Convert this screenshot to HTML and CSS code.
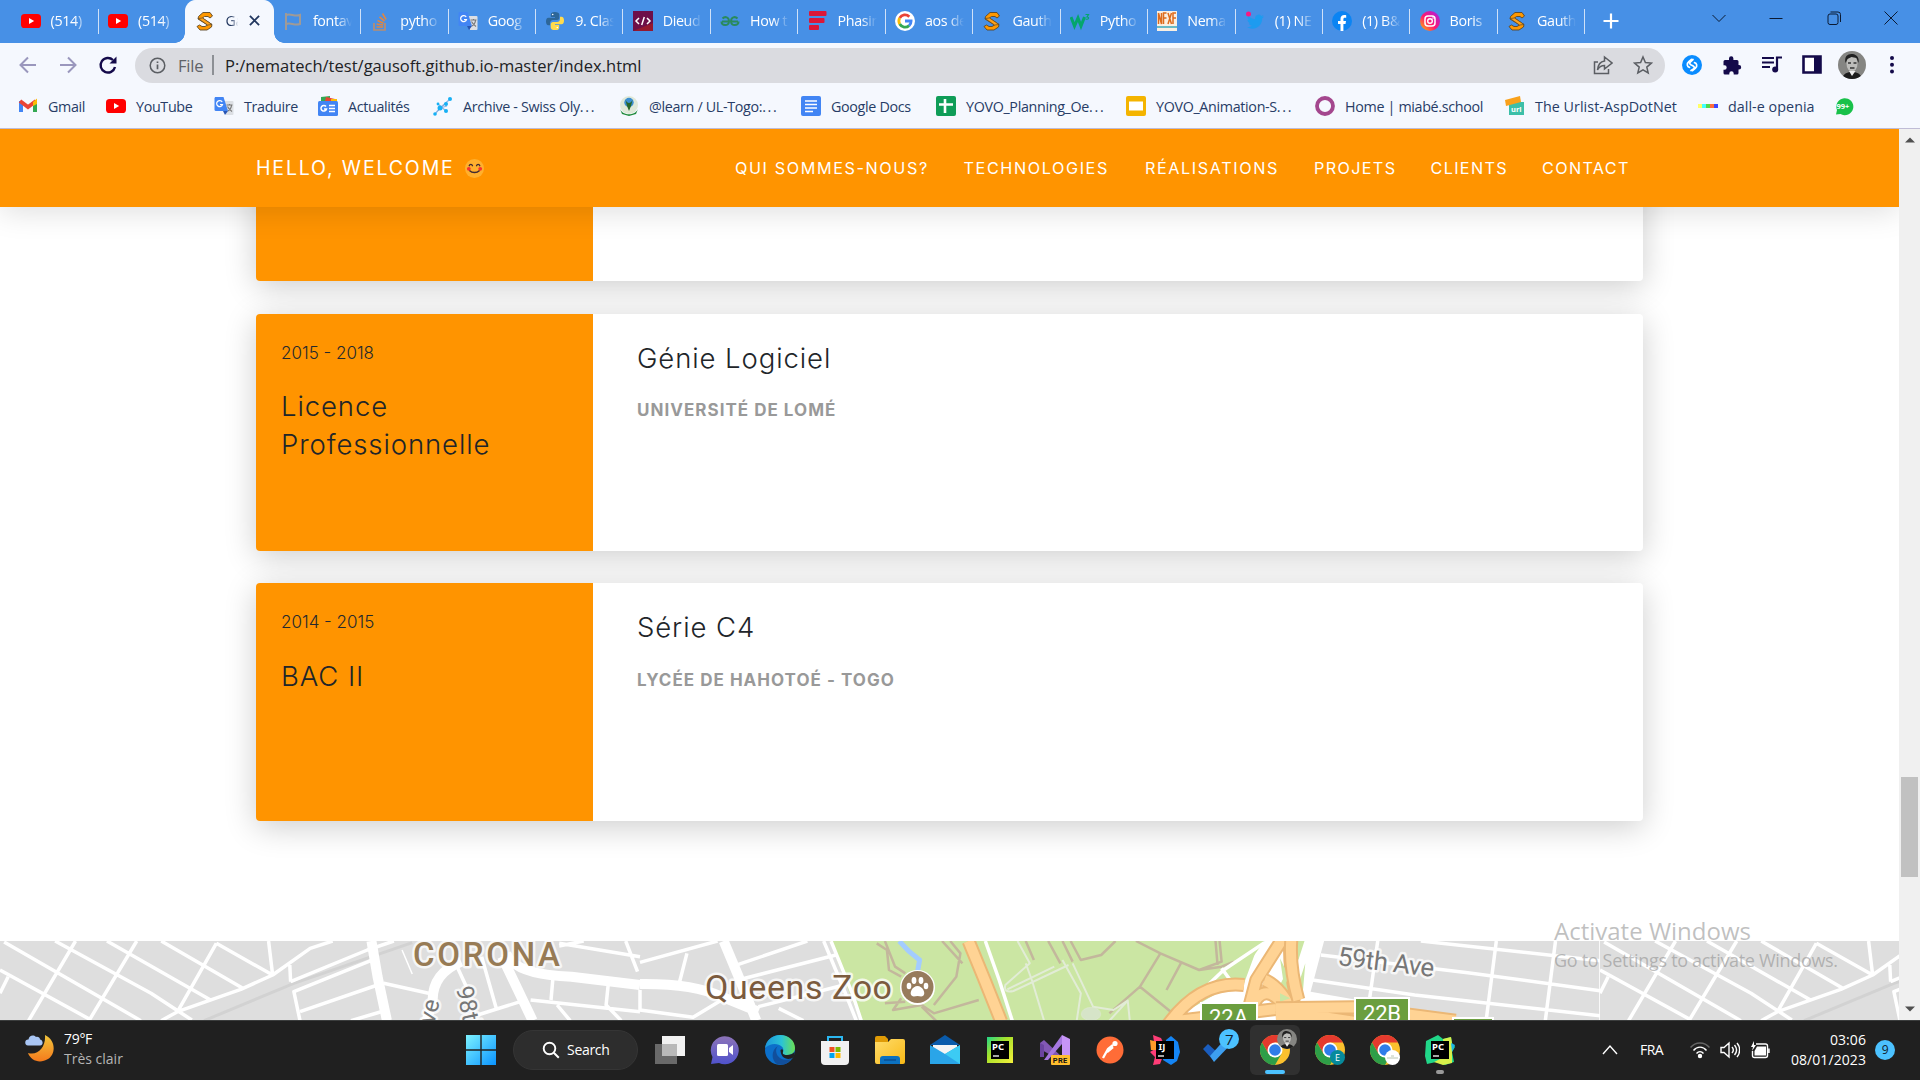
FILE: index.html
```html
<!DOCTYPE html>
<html lang="fr">
<head>
<meta charset="utf-8">
<title>Gauthier</title>
<link rel="stylesheet" href="styles.css">
</head>
<body>
<svg class="defs" width="0" height="0" aria-hidden="true">
  <defs>
    <linearGradient id="g-win" x1="0" y1="0" x2="1" y2="1"><stop offset="0" stop-color="#7df3ff"/><stop offset="1" stop-color="#0a93ff"/></linearGradient>
    <linearGradient id="g-insta" x1="0" y1="1" x2="1" y2="0"><stop offset="0" stop-color="#ffc400"/><stop offset=".45" stop-color="#ff1a6c"/><stop offset="1" stop-color="#a020f0"/></linearGradient>
    <linearGradient id="g-moon" x1="0" y1="0" x2="0" y2="1"><stop offset="0" stop-color="#f2c63c"/><stop offset="1" stop-color="#f47a1c"/></linearGradient>
    <linearGradient id="g-chat" x1="0" y1="0" x2="0" y2="1"><stop offset="0" stop-color="#8d74b8"/><stop offset="1" stop-color="#4f52cc"/></linearGradient>
    <linearGradient id="g-edge" x1="0" y1="0" x2="1" y2="0"><stop offset="0" stop-color="#1c96dc"/><stop offset=".55" stop-color="#2bc3d6"/><stop offset="1" stop-color="#6be054"/></linearGradient>
    <linearGradient id="g-folder" x1="0" y1="0" x2="1" y2="1"><stop offset="0" stop-color="#ffdc6b"/><stop offset="1" stop-color="#f9b916"/></linearGradient>
    <linearGradient id="g-pc" x1="0" y1="0" x2="1" y2="1"><stop offset="0" stop-color="#21d789"/><stop offset=".4" stop-color="#a8e22a"/><stop offset="1" stop-color="#f4f03c"/></linearGradient>
    <symbol id="youtube" viewBox="0 0 20 20"><rect y="3" width="20" height="14" rx="3.6" fill="#f00"/><path d="M8 7l5.2 3L8 13z" fill="#fff"/></symbol>
    <symbol id="slogo" viewBox="0 0 20 20"><path d="M3.500 5.500L8 1.500h7l2.500 3.500-2.500 2-2-1.500H9.500l-2 1.500L17 13.500l-.500 2.500-4.500 3H5L2 15.500 4.500 14l2.500 1.500h3L12.500 14 3 8z" fill="#ff9800" stroke="#5b4626" stroke-width=".9"/><path d="M3.200 7.500L7.500 7l9.500 6.500-4.500.5z" fill="#ffa21a" stroke="#5b4626" stroke-width=".7"/></symbol>
    <symbol id="flag" viewBox="0 0 20 20"><path d="M3 2v17M3 4c5-2 8 2 14 0v9c-6 2-9-2-14 0" fill="none" stroke="#a09a96" stroke-width="2"/></symbol>
    <symbol id="stack" viewBox="0 0 20 20"><path d="M4 12v7h11v-7" fill="none" stroke="#b98d70" stroke-width="1.700"/><path d="M6.500 16h6.500M6.600 13l6.500 1M7.500 9.500l6 2.700M9.500 5.800l5 4.400M12.500 2.500l3.600 6" fill="none" stroke="#e08642" stroke-width="1.600"/></symbol>
    <symbol id="translate" viewBox="0 0 20 20"><path d="M9 5h9.500a1 1 0 0 1 1 1v12a1 1 0 0 1-1 1H12z" fill="#dcdfe4"/><path d="M1 1h8.500l4.500 14H2a1.500 1.500 0 0 1-1.500-1.500v-11z" fill="#4285f4"/><path d="M9 15h5l-3 4z" fill="#2956b4"/><path d="M8.200 6A3 3 0 1 0 8.500 8.500H6" fill="none" stroke="#fff" stroke-width="1.200"/><path d="M12.500 9h6M15.500 8v1M17.500 9c0 3-2 5-3.500 6M13.500 10.500c1 2 2.500 3.500 4.500 5" fill="none" stroke="#777" stroke-width="1.100"/></symbol>
    <symbol id="python" viewBox="0 0 20 20"><path d="M9.800 1c-3 0-4 1-4 2.600V6H10v.8H3.500C1.800 6.800 1 8.500 1 10.600s.9 3.700 2.500 3.700H5v-2.200C5 10.400 6.300 9 8 9h4c1.300 0 2.300-1 2.300-2.300V3.600C14.300 2 12.700 1 9.800 1z" fill="#2d6698"/><path d="M10.200 19c3 0 4-1 4-2.600V14H10v-.8h6.500c1.700 0 2.500-1.700 2.500-3.800s-.9-3.700-2.500-3.700H15v2.200C15 9.600 13.700 11 12 11H8c-1.300 0-2.300 1-2.300 2.300v3.100C5.700 18 7.300 19 10.200 19z" fill="#ffdb4d"/><circle cx="7.700" cy="3.500" r=".8" fill="#fff"/><circle cx="12.300" cy="16.500" r=".8" fill="#fff"/></symbol>
    <symbol id="code" viewBox="0 0 20 20"><rect width="20" height="20" fill="#6d0f49"/><path d="M0 20h20V12z" fill="#94182f"/><path d="M6 7l-3 3 3 3M14 7l3 3-3 3M11.300 6L8.700 14" fill="none" stroke="#fff" stroke-width="1.500"/></symbol>
    <symbol id="geeks" viewBox="0 0 20 20"><path d="M9 10.500H2M9 10.500c0 5-7.500 4.500-7.500 0M2.500 7.500C5 5 9 6 9 10.500M11 10.500h7M11 10.500c0 5 7.500 4.500 7.500 0M17.500 7.500C15 5 11 6 11 10.500" fill="none" stroke="#2a8a5c" stroke-width="2"/></symbol>
    <symbol id="phas" viewBox="0 0 20 20"><g fill="#dc1738"><rect x="1" width="17.500" height="5" rx="1"/><rect x="1" y="7" width="15.500" height="5" rx="1"/><rect x="1" y="14" width="10" height="5" rx="1"/></g></symbol>
    <symbol id="google" viewBox="0 0 20 20"><circle cx="10" cy="10" r="10" fill="#fff"/><g fill="none" stroke-width="2.800"><path d="M14.300 5.700A6.100 6.100 0 0 0 4.700 7" stroke="#ea4335"/><path d="M4.700 7a6.100 6.100 0 0 0 0 6" stroke="#fbbc05"/><path d="M4.700 13a6.100 6.100 0 0 0 9.400 1.600" stroke="#34a853"/><path d="M14.100 14.600A6 6 0 0 0 16.100 10H10" stroke="#4285f4"/></g></symbol>
    <symbol id="w3" viewBox="0 0 20 20"><path d="M1 6l3.500 9 3.500-8 3 8 3.500-9" fill="none" stroke="#04a66c" stroke-width="3"/><path d="M15.500 3.500h3L17 6c2.500 0 2 3-1.500 2" fill="none" stroke="#04a66c" stroke-width="1.200"/></symbol>
    <symbol id="nema" viewBox="0 0 20 20"><rect width="20" height="20" fill="#f9efe2"/><path d="M1.500 13V2l3 11V2M6.500 13V2h3M6.500 7h3M11 13l3.500-11M11 2l3.500 11M16 13V2h3M16 7h3" fill="none" stroke="#dd6b1c" stroke-width="1.500"/><path d="M0 16h20" stroke="#36a9bd" stroke-width="1.500"/></symbol>
    <symbol id="twitter" viewBox="0 0 20 20"><path d="M19 5.500c-.7.300-1.300.5-2 .5.700-.5 1.200-1.100 1.500-1.900-.7.400-1.400.6-2.200.8A3.500 3.500 0 0 0 10.200 8C7.300 7.900 4.800 6.500 3 4.500c-1 1.700-.4 3.700 1.100 4.700-.6 0-1.100-.2-1.600-.4 0 1.700 1.200 3 2.800 3.400-.5.200-1 .2-1.600.1.500 1.400 1.700 2.300 3.300 2.400-1.400 1.100-3.300 1.600-5.100 1.400C8.500 20.200 17.200 16 17.200 7.500c.7-.6 1.300-1.200 1.800-2z" fill="#1d9bf0"/><circle cx="3.500" cy="3" r="2.500" fill="#f91880"/></symbol>
    <symbol id="facebook" viewBox="0 0 20 20"><circle cx="10" cy="10" r="10" fill="#0b84f3"/><path d="M8.500 20v-7H6v-3h2.500V8c0-2.600 1.500-4 3.800-4 .9 0 1.500.1 1.900.2v2.500h-1.300c-1.200 0-1.500.7-1.500 1.500V10H14l-.5 3h-2.100v7z" fill="#fff"/></symbol>
    <symbol id="insta" viewBox="0 0 20 20"><circle cx="10" cy="10" r="10" fill="url(#g-insta)"/><rect x="5" y="5" width="10" height="10" rx="3" fill="none" stroke="#fff" stroke-width="1.500"/><circle cx="10" cy="10" r="2.300" fill="none" stroke="#fff" stroke-width="1.400"/><circle cx="13" cy="7" r=".8" fill="#fff"/></symbol>
    <symbol id="chrome" viewBox="0 0 30 30"><circle cx="15" cy="15" r="15" fill="#fbc02d"/><path d="M2 7.500A15 15 0 0 1 28 7.500H15L8.500 18.800z" fill="#e53a2e"/><path d="M2 7.500l6.500 11.300L15 22.500l6.500-3.700L15 30A15 15 0 0 1 2 7.500z" fill="#2e9e48"/><circle cx="15" cy="15" r="7.500" fill="#fff"/><circle cx="15" cy="15" r="5.800" fill="#2f7de9"/></symbol>
    <symbol id="face" viewBox="0 0 28 28"><clipPath id="round"><circle cx="14" cy="14" r="14"/></clipPath><g clip-path="url(#round)"><rect width="28" height="28" fill="#858582"/><path d="M4 28c1-6 6-7 10-7s9 1 10 7z" fill="#1d1d1d"/><ellipse cx="14" cy="12.500" rx="5.500" ry="8" fill="#bdbdba"/><path d="M7.500 12C6 5 10 2.500 14.500 3s7 4 6 9l-2-5-5-1-4 2z" fill="#222"/><path d="M10 12h3M15.500 12h3M12 17h4.500" stroke="#333" stroke-width="1.300"/><path d="M11 20l3 5 3.500-5z" fill="#eee"/></g></symbol>
    <symbol id="pycharm" viewBox="0 0 30 30"><rect x="6" y="6" width="18" height="18" fill="#000"/><text x="7" y="15" class="ide">PC</text><path d="M8 21h6" stroke="#fff" stroke-width="1.300"/></symbol>
    <symbol id="tile" viewBox="0 0 320 79" overflow="visible">
      <g transform="matrix(.40816 0 0 .33333 0 -11)" fill="none" stroke="#fff">
        <path class="rail" d="M500 272L720 160 1010 38"/>
        <path class="rd" d="M10 36L345 272M135 33L370 190 470 270M262 33L517 211M395 33L595 175M530 40L668 135M0 120L220 268M70 272L185 33M218 272L335 33M435 245L530 40M0 190L20 140M395 272L435 245 590 178 668 135 760 55 815 33M658 33L668 135M712 155L710 105M712 155L900 60 965 33M735 272L720 185 922 85"/>
      </g>
    </symbol>
  </defs>
</svg>

<header class="browser">
  <div class="tabstrip">
    <div class="tab"><svg><use href="#youtube"/></svg><span>(514)</span></div>
    <div class="tab nosep"><svg><use href="#youtube"/></svg><span>(514)</span></div>
    <div class="tab active"><svg><use href="#slogo"/></svg><span>Ga</span><svg class="close" viewBox="0 0 12 12"><path d="M1 1l10 10M11 1L1 11" stroke="#22375f" stroke-width="2"/></svg></div>
    <div class="tab"><svg><use href="#flag"/></svg><span>fontav</span></div>
    <div class="tab"><svg><use href="#stack"/></svg><span>pytho</span></div>
    <div class="tab"><svg><use href="#translate"/></svg><span>Goog</span></div>
    <div class="tab"><svg><use href="#python"/></svg><span>9. Clas</span></div>
    <div class="tab"><svg><use href="#code"/></svg><span>Dieud</span></div>
    <div class="tab"><svg><use href="#geeks"/></svg><span>How t</span></div>
    <div class="tab"><svg><use href="#phas"/></svg><span>Phasin</span></div>
    <div class="tab"><svg><use href="#google"/></svg><span>aos de</span></div>
    <div class="tab"><svg><use href="#slogo"/></svg><span>Gauth</span></div>
    <div class="tab"><svg><use href="#w3"/></svg><span>Pytho</span></div>
    <div class="tab"><svg><use href="#nema"/></svg><span>Nema</span></div>
    <div class="tab"><svg><use href="#twitter"/></svg><span>(1) NE</span></div>
    <div class="tab"><svg><use href="#facebook"/></svg><span>(1) B&amp;</span></div>
    <div class="tab"><svg><use href="#insta"/></svg><span>Boris</span></div>
    <div class="tab"><svg><use href="#slogo"/></svg><span>Gauth</span></div>
    <svg class="newtab" viewBox="0 0 16 16"><path d="M8 .5v15M.5 8h15" stroke="#fff" stroke-width="2.200"/></svg>
    <div class="winctl">
      <svg viewBox="0 0 14 14"><path d="M.5 4L7 10.500 13.500 4"/></svg>
      <svg viewBox="0 0 14 14"><path d="M.5 7.500h13"/></svg>
      <svg viewBox="0 0 14 14"><rect x="1" y="3" width="10" height="10.500" rx="2"/><path d="M3.500 1H11a2.500 2.500 0 0 1 2.500 2.500V11"/></svg>
      <svg viewBox="0 0 14 14"><path d="M.5.500l13 13M13.500.500l-13 13"/></svg>
    </div>
  </div>
  <div class="toolbar">
    <div class="navbtns">
      <svg viewBox="0 0 20 20"><path d="M18 10H3M10 2.500L2.500 10l7.500 7.500" stroke="#9a97bd"/></svg>
      <svg viewBox="0 0 20 20"><path d="M2 10h15M10 2.500l7.500 7.500-7.500 7.500" stroke="#9a97bd"/></svg>
      <svg viewBox="0 0 20 20"><path d="M17 12a7.300 7.300 0 1 1-2-7" stroke="#140a4a" stroke-width="2.400"/><path d="M18.500 1.500v7h-7z" fill="#140a4a"/></svg>
    </div>
    <div class="omnibox">
      <svg class="info" viewBox="0 0 18 18"><circle cx="9" cy="9" r="7.700" fill="none" stroke="#5b5e63" stroke-width="1.600"/><path d="M9 8v5M9 4.700v1.700" stroke="#5b5e63" stroke-width="1.800"/></svg>
      <span class="scheme">File</span><i class="bar"></i>
      <span class="url">P:/nematech/test/gausoft.github.io-master/index.html</span>
      <svg class="oi" viewBox="0 0 20 20"><path d="M5 7H1.500v11.500h14V14M11.500 6V2l7.500 6-7.500 6v-3.500C8 10.500 6 12 4.500 15 5 10 7 6.500 11.500 6z"/></svg>
      <svg class="oi star" viewBox="0 0 20 20"><path d="M10 2l2.400 5.600 6 .5-4.600 4 1.400 5.900L10 14.900 4.800 18l1.400-5.900-4.600-4 6-.5z"/></svg>
    </div>
    <div class="exts">
      <svg viewBox="0 0 20 20"><circle cx="10" cy="10" r="10" fill="#0a8cff"/><path d="M7.500 12.300C5 11.800 4.500 8.500 6.500 7l3-2.700M12.500 7.700c2.500.5 3 3.800 1 5.300l-3 2.700M11 4.500L8.500 6.800c-1.300 1.200-1 2.200.3 3l2.400 1.200c1.300.8 1.600 1.800.3 3L9 15.500" fill="none" stroke="#fff" stroke-width="1.700" stroke-linecap="round"/></svg>
      <svg viewBox="0 0 20 20"><path d="M7 3.500a2.200 2.200 0 0 1 4.400 0V5H15a1.500 1.500 0 0 1 1.500 1.500V10H17a2.200 2.200 0 0 1 0 4.400h-.5V18a1.500 1.500 0 0 1-1.500 1.500h-3.300v-1a2.200 2.200 0 0 0-4.400 0v1H3A1.500 1.500 0 0 1 1.500 18v-3.300h1a2.200 2.200 0 0 0 0-4.400h-1V6.500A1.500 1.500 0 0 1 3 5h4z" fill="#140a4a"/></svg>
      <svg viewBox="0 0 20 20"><path d="M0 3h12M0 7.500h12M0 12h8M15 14V2.500h5" fill="none" stroke="#140a4a" stroke-width="2.200"/><circle cx="13.200" cy="14.500" r="3" fill="#140a4a"/></svg>
      <svg viewBox="0 0 20 20"><path d="M1.500 1.500h17v16h-17z" fill="#fff" stroke="#140a4a" stroke-width="2.600"/><path d="M12 1h7v17h-7z" fill="#140a4a"/></svg>
      <svg class="avatar"><use href="#face"/></svg>
      <svg viewBox="0 0 20 20"><g fill="#140a4a"><circle cx="10" cy="3" r="2"/><circle cx="10" cy="9.800" r="2"/><circle cx="10" cy="16.500" r="2"/></g></svg>
    </div>
  </div>
  <nav class="bookmarks">
    <a><svg viewBox="0 0 20 20"><path d="M3 16V5" stroke="#4285f4" stroke-width="4"/><path d="M17 16V5" stroke="#34a853" stroke-width="4"/><path d="M2 5l8 6 8-6" fill="none" stroke="#ea4335" stroke-width="4"/><path d="M15 6l4-3.500V8l-4 2z" fill="#fbbc05"/></svg>Gmail</a>
    <a><svg><use href="#youtube"/></svg>YouTube</a>
    <a><svg><use href="#translate"/></svg>Traduire</a>
    <a><svg viewBox="0 0 20 20"><path d="M3 5V1l9-1v5z" fill="#34a853"/><path d="M7 5l1-4 9 2v3z" fill="#ea4335"/><path d="M13 3h6v4h-6z" fill="#fbbc05"/><rect y="5" width="20" height="15" rx="1.500" fill="#4285f4"/><path d="M8 10.500a2.800 2.800 0 1 0 .5 2.500H6M11 9.500h6M11 12.500h6M11 15.500h6" fill="none" stroke="#fff" stroke-width="1.500"/></svg>Actualités</a>
    <a><svg viewBox="0 0 20 20"><path d="M2 18l5-6 9-8M5 8l8 7M7 12l7-2" stroke="#8fb6e8" stroke-width="1.300"/><g fill="#16b0f5"><circle cx="2" cy="18" r="1.800"/><circle cx="7" cy="12" r="2.500"/><circle cx="17" cy="3" r="2"/><circle cx="13" cy="8" r="2"/><circle cx="13" cy="15" r="2"/><circle cx="5" cy="8" r="1.400"/></g></svg><span>Archive - Swiss Oly<span class="dots">...</span></span></a>
    <a><svg viewBox="0 0 20 20"><circle cx="10" cy="9" r="9" fill="#dfe8d8"/><path d="M1 13c3 7 15 7 18 0l-2 5-7 2-7-2z" fill="#1f8a3b"/><circle cx="10" cy="6.500" r="4.700" fill="#3c8fd0"/><path d="M6.500 4c2 4 5 4 7 0l-1.500 6-2 5-2-5z" fill="#27672a"/></svg><span>@learn / UL-Togo:<span class="dots">...</span></span></a>
    <a><svg viewBox="0 0 20 20"><rect width="20" height="20" rx="2" fill="#4285f4"/><path d="M4 5h12M4 8.500h12M4 12h12M4 15.500h8" stroke="#fff" stroke-width="1.700"/></svg>Google Docs</a>
    <a><svg viewBox="0 0 20 20"><rect width="20" height="20" rx="2" fill="#0f9d58"/><path d="M9 3v14M3 8.500h14" stroke="#fff" stroke-width="2.600"/></svg><span>YOVO_Planning_Oe<span class="dots">...</span></span></a>
    <a><svg viewBox="0 0 20 20"><rect width="20" height="20" rx="2" fill="#f4b400"/><rect x="3" y="5.500" width="14" height="9" fill="#fff"/></svg><span>YOVO_Animation-S<span class="dots">...</span></span></a>
    <a><svg viewBox="0 0 20 20"><circle cx="10" cy="10" r="8" fill="none" stroke="#a4478e" stroke-width="3.800"/></svg>Home | miabé.school</a>
    <a class="wide"><svg viewBox="0 0 20 20"><path d="M4 6h15v13H4z" fill="#3cbfa8"/><path d="M0 4l15-4 1 6L1 10z" fill="#f9a11b"/><text x="6" y="15.500" class="mini">url</text></svg>The Urlist-AspDotNet</a>
    <a class="wide"><svg viewBox="0 0 20 20"><path d="M0 8h4v4H0z" fill="#ffff67"/><path d="M4 8h4v4H4z" fill="#43ffff"/><path d="M8 8h4v4H8z" fill="#50d94a"/><path d="M12 8h4v4h-4z" fill="#ff6e3c"/><path d="M16 8h4v4h-4z" fill="#3c46ff"/></svg>dall-e openia</a>
    <a><svg class="wa" viewBox="0 0 20 20"><path d="M2 18.500l1-4.500A8.500 8.500 0 1 1 6.500 18z" fill="#19c14a"/><text x="2.500" y="13" class="mini">99+</text></svg></a>
  </nav>
</header>

<main class="viewport">
  <div class="page">
    <header class="site-head">
      <div class="brand">HELLO, WELCOME
        <svg viewBox="0 0 20 20"><circle cx="10" cy="10" r="10" fill="#ffb02e"/><g fill="none" stroke="#402a32" stroke-width="1.500" stroke-linecap="round"><path d="M4.500 7c.5-1.800 2.800-1.800 3.300 0M12.200 7c.5-1.800 2.800-1.800 3.300 0M5 12.300c2.300 2.600 7.700 2.600 10 0"/></g><circle cx="4" cy="10.300" r="2" fill="#f8312f"/><circle cx="16" cy="10.300" r="2" fill="#f8312f"/></svg>
      </div>
      <nav class="menu"><a>QUI SOMMES-NOUS?</a><a>TECHNOLOGIES</a><a>RÉALISATIONS</a><a class="tight">PROJETS</a><a class="tight">CLIENTS</a><a class="tight">CONTACT</a></nav>
    </header>
    <section class="cards">
      <article class="card first"><div class="left"></div><div class="right"></div></article>
      <article class="card second"><div class="left"><p>2015 - 2018</p><h3>Licence<br>Professionnelle</h3></div><div class="right"><h3>Génie Logiciel</h3><h4>UNIVERSITÉ DE LOMÉ</h4></div></article>
      <article class="card last"><div class="left"><p>2014 - 2015</p><h3>BAC II</h3></div><div class="right"><h3>Série C4</h3><h4>LYCÉE DE HAHOTOÉ - TOGO</h4></div></article>
    </section>
    <svg class="map" viewBox="0 0 1899 79">
      <rect width="1899" height="79" fill="#dedede"/>
      <use href="#tile" x="0" y="0" width="320" height="79"/>
      <g transform="matrix(.40816 0 0 .33333 0 -11)" fill="none" stroke="#fff">
        <path class="rd" d="M735 245L925 165M940 160L1050 190M860 272L940 243M1120 110L1150 190M1180 80L1217 240M1170 255L1275 215M1370 40L1568 80M1355 140L1350 210M1300 210L1568 245M1490 165L1485 225 1522 272M1365 225L1397 272M1533 33L1562 125M1370 48L1430 33"/>
        <path class="rd thin" d="M985 60L1010 132"/>
        <path class="mid" d="M910 33L925 140 948 272M1130 95Q1060 130 1060 210L1045 272M1230 80L1305 272"/>
        <path class="mid" d="M1240 70Q1260 135 1400 140L1568 165"/>
      </g>
      <g transform="matrix(.40816 0 0 .33333 640 -11)" fill="none" stroke="#fff">
        <path fill="#cbe6a3" stroke="none" d="M465 33H1640V275H540z"/>
        <path class="mid" d="M205 33L245 150 285 272M0 162Q130 160 200 200L290 245"/>
        <path class="rd" d="M115 70L95 165M0 97L190 33M225 110L410 33M240 150L480 75M0 180V240L130 262 200 210M290 230L500 165M450 33L500 180 530 272M468 33L520 190 542 272M340 235L400 272"/>
        <path class="trail" d="M580 40L605 60 610 120 640 140M600 33L625 110 650 130M760 33L785 70 775 140 720 225M740 33L790 100M640 205L620 240 690 225 720 250 830 210M690 230L725 272M600 220L650 215M945 33L965 90M1000 33L1030 100M1035 33L1060 95M1055 33L1080 90 1130 75 1165 33M1275 70L1225 170 1150 250M1275 70L1215 33M1275 70L1370 120 1425 95 1420 33M1225 170L1305 250M1325 100L1290 180M1410 33L1415 105M1370 120L1425 110 1455 95"/>
        <path class="lite" d="M925 33L955 100 895 165Q890 190 915 183L1050 105M900 178L1015 110M945 100L960 150 990 272M1035 90L1080 190 1070 272M1060 100L1110 230 1160 240 1195 212 1150 272M1195 212L1200 272"/>
        <ellipse cx="1105" cy="252" rx="24" ry="20" fill="#d6e4c8" stroke="#e4edda"/>
        <path class="water" d="M635 33L660 65 685 90 680 125M1535 33L1515 100"/>
        <path class="hwb" d="M805 33Q845 150 885 275"/><path class="hw" d="M805 33Q845 150 885 275"/>
        <path class="rd" d="M846 33L880 150 912 272"/>
        <path fill="#fff" stroke="none" d="M1455 160L1530 33H1700V272H1300z"/>
        <path fill="#cbe6a3" stroke="none" d="M1400 155L1440 120 1510 60 1480 160 1380 190zM1570 160L1595 100 1620 250 1580 235z"/>
        <path class="rd" d="M1530 38L1430 120 1300 272M1425 115L1455 165"/>
        <path class="hwb" d="M1290 290Q1370 150 1480 165M1575 25L1510 150 1480 290M1500 230Q1530 150 1580 230L1640 250M1530 150Q1570 170 1600 250M1594 25Q1588 100 1608 200M1300 275L1640 225"/><path class="hw" d="M1290 290Q1370 150 1480 165M1575 25L1510 150 1480 290M1500 230Q1530 150 1580 230L1640 250M1530 150Q1570 170 1600 250M1594 25Q1588 100 1608 200M1300 275L1640 225"/>
      </g>
      <g transform="matrix(.40816 0 0 .33333 1280 -41)" fill="none" stroke="#fff">
        <path fill="#fff" stroke="none" d="M50 123H784V365H50z"/>
        <path fill="#dedede" stroke="none" d="M108 123H782V362H330V330L75 275z"/>
        <path fill="#cbe6a3" stroke="none" d="M30 123H60L45 180zM50 235L62 190 55 290 45 260zM0 175L22 230 10 260zM0 280L25 295 0 305z"/>
        <path class="rd" d="M100 165L460 218 784 272M345 123L784 182M80 240L330 285 784 347M240 118L220 292M530 123L505 362M675 123L650 362"/>
        <path class="hwb" d="M28 115Q22 200 45 300M-10 325L180 322 430 362M-10 355L100 350 180 365"/><path class="hw" d="M28 115Q22 200 45 300M-10 325L180 322 430 362M-10 355L100 350 180 365"/>
      </g>
      <svg x="1600" y="0" width="299" height="79" viewBox="0 0 299 79"><rect width="299" height="79" fill="#dedede"/><use href="#tile" width="320" height="79"/></svg>
      <text class="lbl corona" x="413" y="25" textLength="147">CORONA</text>
      <text class="lbl zoo" x="705" y="58" textLength="187">Queens Zoo</text>
      <circle cx="917.500" cy="46.500" r="17.500" fill="#fff"/><circle cx="917.500" cy="46" r="16" fill="#977b5c"/>
      <g fill="#fff"><path d="M917.500 45c5 0 8.500 7 6 9.500-2 2-4 .500-6 .500s-4 1.500-6-.500c-2.500-2.500 1-9.500 6-9.500z"/><ellipse cx="909" cy="45" rx="2.300" ry="3.200"/><ellipse cx="914" cy="39.500" rx="2.400" ry="3.400"/><ellipse cx="921" cy="39.500" rx="2.400" ry="3.400"/><ellipse cx="926" cy="45" rx="2.300" ry="3.200"/></g>
      <text class="lbl street" transform="translate(434 84) rotate(-76)">ve</text>
      <text class="lbl street" transform="translate(456 47) rotate(78)">98th</text>
      <text class="lbl ave" transform="translate(1337 24) rotate(7)" textLength="97">59th Ave</text>
      <g class="badge"><rect x="1201" y="62" width="56" height="22"/><text x="1209" y="84" textLength="39">22A</text><rect x="1355" y="57" width="54" height="26"/><text x="1363" y="80" textLength="38">22B</text><rect x="1453" y="77" width="40" height="10"/></g>
    </svg>
    <div class="watermark"><b>Activate Windows</b><span>Go to Settings to activate Windows.</span></div>
  </div>
  <div class="scroll">
    <svg viewBox="0 0 10 6"><path d="M0 5.500L5 .500l5 5z"/></svg><i></i><svg class="down" viewBox="0 0 10 6"><path d="M0 .500h10l-5 5z"/></svg>
  </div>
</main>

<footer class="taskbar">
  <div class="weather">
    <svg viewBox="0 0 30 30"><path d="M20 2c11 5 11 19 3 24S6 28 3 20c10 3 18-6 17-18z" fill="url(#g-moon)"/><path d="M3 12.500a3 3 0 0 1 .500-6C4 3 8 1 11 4c2-.500 4 .500 4 2.500 3 0 4 6 0 6z" fill="#a9c6f5"/></svg>
    <div><span>79°F</span><span class="dim">Très clair</span></div>
  </div>
  <div class="apps">
    <svg viewBox="0 0 30 30"><path d="M0 0h14.300v14.300H0zM15.700 0H30v14.300H15.700zM0 15.700h14.300V30H0zM15.700 15.700H30V30H15.700z" fill="url(#g-win)"/></svg>
    <div class="search"><svg viewBox="0 0 18 18"><circle cx="7.500" cy="7.500" r="5.800" fill="none" stroke="#fff" stroke-width="1.900"/><path d="M11.800 11.800l5 5" stroke="#fff" stroke-width="2"/></svg>Search</div>
    <svg viewBox="0 0 30 30"><path d="M7 1h23v20H7z" fill="#f2f2f2"/><path d="M0 9h22v20H0z" fill="#777" opacity=".85"/><path d="M7 9h15v12H7z" fill="#b9b9b9"/></svg>
    <svg viewBox="0 0 30 30"><path d="M1 29l1.500-7A14 14 0 1 1 9 28z" fill="url(#g-chat)"/><rect x="7" y="9" width="11" height="12" rx="1.500" fill="#fff"/><path d="M19 13l4-3v10l-4-3z" fill="#fff"/></svg>
    <svg viewBox="0 0 30 30"><circle cx="15" cy="15" r="15" fill="#0c6fca"/><path d="M0 13C1 5 8 0 15 0c9 0 15 6 15 13 0 5-4 7-8 7-3 0-5-1-4-3 3-7-10-12-18-4z" fill="url(#g-edge)"/><path d="M13 11c-5 5 0 17 13 13-3 5-8 7-14 5-6-4-6-14 1-18z" fill="#114f9c"/><path d="M18 17c-1 2 1 3 4 3s6-1 7.500-3c1 5-2 7-6 7-5 0-8-4-8-9 2-2 3 0 2.500 2z" fill="#202020"/></svg>
    <svg viewBox="0 0 30 30"><path d="M8 7V2h14v5" fill="none" stroke="#2bb7f0" stroke-width="2"/><path d="M1 6h28v20q0 4-4 4H5q-4 0-4-4z" fill="#f1f1f1"/><path d="M9.500 12h5v5h-5z" fill="#f25022"/><path d="M15.500 12h5v5h-5z" fill="#7fba00"/><path d="M9.500 18h5v5h-5z" fill="#00a4ef"/><path d="M15.500 18h5v5h-5z" fill="#ffb900"/></svg>
    <svg viewBox="0 0 30 30"><path d="M0 3q0-2 2-2h8l3 3v6H0z" fill="#e09b06"/><path d="M0 7h13l3-3h12q2 0 2 2v21q0 2-2 2H2q-2 0-2-2z" fill="url(#g-folder)"/><path d="M5 29v-5q0-3 3-3h14q3 0 3 3v5z" fill="#0c71c0"/><path d="M9 25h12" stroke="#0a4f93" stroke-width="1.500"/></svg>
    <svg viewBox="0 0 30 30"><path d="M0 10L15 0l15 10z" fill="#0a5bab"/><path d="M3 10h24v12H3z" fill="#f4f4f4"/><path d="M0 10l15 9 15-9v19H0z" fill="#2aa5e8"/><path d="M15 19l15-9v19z" fill="#3ccbf4"/></svg>
    <svg viewBox="0 0 30 30"><rect x="2" y="2" width="26" height="26" fill="url(#g-pc)"/><use href="#pycharm"/></svg>
    <svg viewBox="0 0 30 30"><path d="M0 8l4-3 18 17v4l-6-3L0 14z" fill="#8258b5"/><path d="M0 22V8l4 2v12z" fill="#6b44a0"/><path d="M4 25L22 0v9L8 25z" fill="#a678e0"/><path d="M22 0l8 4v22l-8 4z" fill="#c795f7"/><rect x="11" y="20" width="19" height="10" rx="1" fill="#ffbe2e"/><text x="12.800" y="28" class="pre">PRE</text></svg>
    <svg viewBox="0 0 30 30"><circle cx="15" cy="15" r="13.500" fill="#ff6c37"/><path d="M8 23l5-9 5-4M12 17l6-5" stroke="#fff" stroke-width="2.300" fill="none"/><circle cx="20" cy="8.500" r="2.600" fill="#fff"/></svg>
    <svg viewBox="0 0 30 30"><path d="M3 0l8 3 5 10-6 16-7 1 2-8-5-5 5-3z" fill="#ff3d77"/><path d="M0 5l8 2v8H1z" fill="#ff9a2a"/><path d="M16 5l5-4 7 6 2 10-3 9-6 4-8-5z" fill="#1485f5"/><rect x="6" y="6" width="18" height="18" fill="#000"/><text x="8.500" y="15" class="ide">IJ</text><path d="M8 21h6" stroke="#fff" stroke-width="1.300"/></svg>
    <svg class="todo" viewBox="0 0 36 36"><path d="M0 20l5-5 10 9-5 7z" fill="#1a5dbe"/><path d="M7 27l16-18 6 5-18 19z" fill="#3d9ff0"/><circle cx="26" cy="10" r="10" fill="#4cc2ff"/><text x="22" y="15.500" class="num">7</text></svg>
    <div class="running"><svg viewBox="0 0 30 30"><use href="#chrome" width="30" height="30"/></svg><svg class="who"><use href="#face"/></svg></div>
    <svg viewBox="0 0 30 30"><use href="#chrome" width="30" height="30"/><circle cx="22.500" cy="22.500" r="7.500" fill="#078a9b"/><text x="20" y="26" class="badge-e">E</text></svg>
    <svg viewBox="0 0 30 30"><use href="#chrome" width="30" height="30"/><circle cx="22.500" cy="22.500" r="7.500" fill="#fff"/><path d="M17 23h11M21 21h3" stroke="#a8b8a0" stroke-width=".8"/></svg>
    <div class="idle"><svg viewBox="0 0 30 30"><path d="M1 6l12-6 5 4 8-2 1 6 3 4-3 5 2 10-9 3-9-3-9 2-2-8z" fill="#21d789"/><path d="M18 4l8-2 1 6v20l-9 2-9-3 10-5z" fill="#d8f04a"/><path d="M26 8l4 2-3 7z" fill="#1bb6e8"/><use href="#pycharm"/></svg></div>
  </div>
  <div class="tray">
    <svg class="up" viewBox="0 0 16 16"><path d="M1 12l7-8 7 8"/></svg>
    <span class="lang">FRA</span>
    <svg viewBox="0 0 20 20"><path d="M.500 7.500c5-6 14-6 19 0" stroke="#666"/><path d="M3.500 10.500c3.500-4.500 9.500-4.500 13 0M6.500 13.500c2-2.500 5-2.500 7 0"/><circle cx="10" cy="16" r="1.500" fill="#fff"/></svg>
    <svg viewBox="0 0 20 20"><path d="M1 7.500h3L9 3v14l-5-4.500H1zM12 7c1.500 1.700 1.500 4.300 0 6M14.500 5c2.500 3 2.500 7 0 10M17 3c3.500 4 3.500 10 0 14"/></svg>
    <svg viewBox="0 0 20 20"><path d="M6 4h9.500q2 0 2 2v9.500q0 2-2 2h-11q-2 0-2-2V11M19 8.500v4.500"/><path d="M7 6.500h9v9H4.500V11z" fill="#fff" stroke="none"/><path d="M4 1L1 7h2l-1 4 4-6H4z" fill="#fff" stroke="none"/></svg>
    <div class="clock"><span>03:06</span><span>08/01/2023</span></div>
    <b class="count">9</b>
  </div>
</footer>
</body>
</html>
```
FILE: styles.css
```css
* { box-sizing: border-box; margin: 0; padding: 0; }
body { width: 1920px; height: 1080px; overflow: hidden; display: flex; flex-direction: column; background: #fff; font-family: "Open Sans", "Noto Sans", sans-serif; }
svg { display: block; flex: none; }
.defs { position: absolute; }

/* browser chrome */
.browser { height: 129px; background: #f5f8fe; border-bottom: 1px solid #bfbcd6; flex: none; }
.tabstrip { height: 43px; background: #4790e6; display: flex; padding-left: 11.4px; }
.tab { position: relative; width: 87.450px; flex: none; display: flex; align-items: center; gap: 10px; padding: 0 9px 2px 9.200px; color: #fff; font-size: 14.300px; letter-spacing: -.35px; }
.tab svg { width: 20px; height: 20px; }
.tab span { flex: 1; min-width: 0; white-space: nowrap; -webkit-mask-image: linear-gradient(90deg, #000 60%, transparent 100%); mask-image: linear-gradient(90deg, #000 60%, transparent 100%); }
.tab::after { content: ""; position: absolute; right: 0; top: 9px; width: 1px; height: 25px; background: #cfe1f8; }
.tab.nosep::after, .tab.active::after { display: none; }
.tab.active { background: #f5f8fe; border-radius: 11px 11px 0 0; color: #22375f; padding-right: 14px; box-shadow: -1px 0 #f5f8fe; }
.tab.active span { -webkit-mask-image: linear-gradient(90deg, #000 40%, transparent 95%); mask-image: linear-gradient(90deg, #000 40%, transparent 95%); }
.tab.active::before { content: ""; position: absolute; left: -11px; right: -10px; bottom: 0; height: 10px; background: radial-gradient(circle at 0 0, transparent 9.500px, #f5f8fe 10px) 0 0 / 10px 10px no-repeat, radial-gradient(circle at 100% 0, transparent 9.500px, #f5f8fe 10px) 100% 0 / 10px 10px no-repeat; }
.tab .close { width: 11px; height: 11px; }
.newtab { width: 16px; height: 16px; margin: 13px 0 0 18px; }
.winctl { margin: 11px 22px 0 auto; display: flex; gap: 43.500px; }
.winctl svg { width: 14px; height: 14px; fill: none; stroke: #0b1a33; stroke-width: 1; }
.toolbar { height: 44px; display: flex; align-items: center; }
.navbtns { width: 135px; display: flex; gap: 20px; padding-left: 18px; }
.navbtns svg { width: 20px; height: 20px; fill: none; stroke-width: 2; }
.omnibox { width: 1530px; height: 35px; border-radius: 18px; background: #dadbe0; display: flex; align-items: center; padding: 0 12px 0 14px; font-size: 16.500px; }
.info { width: 17px; height: 17px; }
.scheme { width: 26px; margin-left: 12px; color: #5f6368; letter-spacing: -.2px; }
.bar { width: 2px; height: 20px; margin: 0 11px 0 8px; background: #8d9095; }
.url { flex: 1; color: #202124; letter-spacing: .020px; }
.oi { width: 20px; height: 20px; fill: none; stroke: #5b5e63; stroke-width: 1.500; }
.star { margin-left: 20px; }
.exts { display: flex; gap: 20px; padding-left: 17px; align-items: center; }
.exts svg { width: 20px; height: 20px; }
.exts .avatar { width: 28px; height: 28px; margin: 0 -4px; }
.bookmarks { height: 41px; display: grid; align-items: center; padding: 0 0 3px 18px; grid-template-columns: 88px 108px 104px 115px 186px 182px 135px 190px 189px 190px 193px 136px 40px; color: #273c66; font-size: 14.300px; letter-spacing: -.33px; }
.bookmarks a { display: flex; align-items: center; gap: 10px; white-space: nowrap; }
.bookmarks svg { width: 20px; height: 20px; }
.bookmarks .wide { letter-spacing: .050px; }
.dots { letter-spacing: 1.700px; }
.mini { font: bold 7.500px "Open Sans", sans-serif; fill: #fff; letter-spacing: 0; }

/* page */
.viewport { height: 891px; display: flex; flex: none; }
.page { position: relative; width: 1899px; height: 891px; overflow: hidden; font-family: Inter, "Open Sans", sans-serif; }
.site-head { position: relative; z-index: 2; height: 78px; background: #ff9400; display: flex; align-items: center; justify-content: space-between; padding: 0 264px 0 256px; color: #fff; box-shadow: 0 5px 30px rgba(0,0,0,.13); }
.brand { display: flex; align-items: center; gap: 10px; font-size: 19.500px; letter-spacing: 1.850px; white-space: nowrap; }
.brand svg { width: 19px; height: 19px; }
.menu { display: grid; grid-template-columns: 228.500px 181.500px 169px 116.500px 111.500px 93px; width: 900px; font-size: 16.200px; letter-spacing: 1.600px; white-space: nowrap; }
.menu .tight { letter-spacing: 1.350px; }
.card { display: flex; width: 1387px; height: 238px; margin-left: 256px; border-radius: 4px; background: #fff; box-shadow: 0 6px 32px rgba(0,0,0,.2); }
.card.first { height: 114px; margin-top: -40px; margin-bottom: 33px; }
.card.second { height: 237px; margin-bottom: 32px; }
.card.last { margin-bottom: 120px; }
.left { width: 337px; background: #ff9400; border-radius: 4px 0 0 4px; padding: 27px 25px; color: #24292e; }
.left p { font-size: 17px; line-height: 24px; font-weight: 300; letter-spacing: 0; }
h3 { font-weight: 300; font-size: 27.500px; line-height: 38px; color: #212529; letter-spacing: .9px; }
.left h3 { margin-top: 23px; }
.second .left h3 { margin-top: 22px; }
.right { padding: 25px 44px; }
h4 { font-size: 17px; line-height: 24px; font-weight: 700; color: #999; margin-top: 22px; letter-spacing: 1.020px; }
.second h4 { margin-top: 21px; }
.map { width: 1899px; height: 79px; }
.rd, .mid, .rail, .trail, .lite, .water, .hw, .hwb { vector-effect: non-scaling-stroke; stroke-linejoin: round; fill: none; }
.rd { stroke-width: 3.500px; }
.thin { stroke-width: 1.500px; }
.mid { stroke-width: 10px; }
.rail { stroke: #d2d2d2; stroke-width: 3px; }
.trail { stroke: #c3b79c; stroke-width: 2.500px; }
.lite { stroke: #e2ecd6; stroke-width: 2px; }
.water { stroke: #a3ccff; stroke-width: 5px; }
.hwb { stroke: #ebb775; stroke-width: 14px; }
.hw { stroke: #ffd394; stroke-width: 10px; }
.lbl { font-family: Roboto, sans-serif; paint-order: stroke; stroke: rgba(255,255,255,.75); stroke-width: 5px; stroke-linejoin: round; }
.corona { font-size: 33px; font-weight: 500; fill: #977b55; }
.zoo { font-size: 34px; fill: #7b5b3e; }
.street { font-size: 24px; fill: #777; }
.ave { font-size: 26px; fill: #777; }
.badge rect { fill: #6b9e3f; stroke: #fff; stroke-width: 2px; }
.badge text { font: 22px Roboto, sans-serif; fill: #fff; }
.watermark { position: absolute; left: 1554px; top: 784px; display: flex; flex-direction: column; font-family: "Open Sans", sans-serif; color: rgba(130,130,130,.5); white-space: nowrap; }
.watermark b { font-weight: 400; font-size: 24px; line-height: 36px; }
.watermark span { font-size: 18px; line-height: 22px; letter-spacing: -.32px; }
.scroll { width: 21px; background: #f0f0f0; display: flex; flex-direction: column; align-items: center; padding-top: 8px; }
.scroll svg { width: 10px; height: 6px; fill: #505050; }
.scroll i { width: 17px; height: 100px; margin-top: 634px; background: #c1c1c1; }
.scroll .down { margin-top: 129px; }

/* taskbar */
.taskbar { height: 60px; background: #202020; border-top: 1px solid #3b3d3d; display: flex; color: #fff; font-size: 14px; letter-spacing: -.3px; line-height: 20px; flex: none; }
.weather { width: 466px; display: flex; padding: 8px 0 0 25px; gap: 9px; }
.weather svg { width: 30px; height: 30px; margin-top: 4px; }
.weather span, .clock span { display: block; }
.weather .dim { color: #b5b5b5; letter-spacing: 0; }
.apps { display: flex; align-items: center; gap: 25px; width: 1003px; padding-bottom: 1px; }
.apps svg { width: 30px; height: 30px; }
.search { width: 125px; height: 40px; margin: 0 -8px; border-radius: 20px; background: #2d2d2d; border: 1px solid #353535; display: flex; align-items: center; gap: 7px; padding-left: 28px; }
.apps .search svg { width: 18px; height: 18px; }
.apps .todo { width: 36px; height: 36px; margin: -6px -4px 0 -2px; }
.running { position: relative; width: 50px; height: 50px; margin: 0 -10px; padding: 10px; border-radius: 6px; background: #303030; }
.running .who { position: absolute; width: 20px; height: 20px; right: 3px; top: 4px; }
.running::after { content: ""; position: absolute; left: 15px; bottom: 1px; width: 20px; height: 4px; border-radius: 2px; background: #4cc2ff; }
.idle { position: relative; }
.idle::after { content: ""; position: absolute; left: 11px; bottom: -9px; width: 8px; height: 4px; border-radius: 2px; background: #9a9a9a; }
.ide { font: bold 9.500px "Noto Sans", sans-serif; fill: #fff; letter-spacing: 0; }
.pre { font: bold 7.500px Roboto, sans-serif; fill: #111; letter-spacing: .3px; }
.badge-e { font: 9px "Open Sans", sans-serif; fill: #fff; letter-spacing: 0; }
.num { font: 15px "Open Sans", sans-serif; fill: #10202e; }
.tray { flex: 1; display: flex; align-items: center; padding: 0 0 2px 133px; }
.tray svg { width: 20px; height: 20px; margin-right: 10px; fill: none; stroke: #fff; stroke-width: 1.400; }
.tray .up { width: 16px; height: 16px; margin-right: 22px; }
.lang { width: 50px; letter-spacing: -.5px; }
.clock { width: 86px; text-align: right; letter-spacing: .080px; }
.count { width: 20px; height: 20px; margin-left: 9px; border-radius: 50%; background: #4cc2ff; color: #10202e; font-weight: 400; font-size: 12px; text-align: center; }
```
